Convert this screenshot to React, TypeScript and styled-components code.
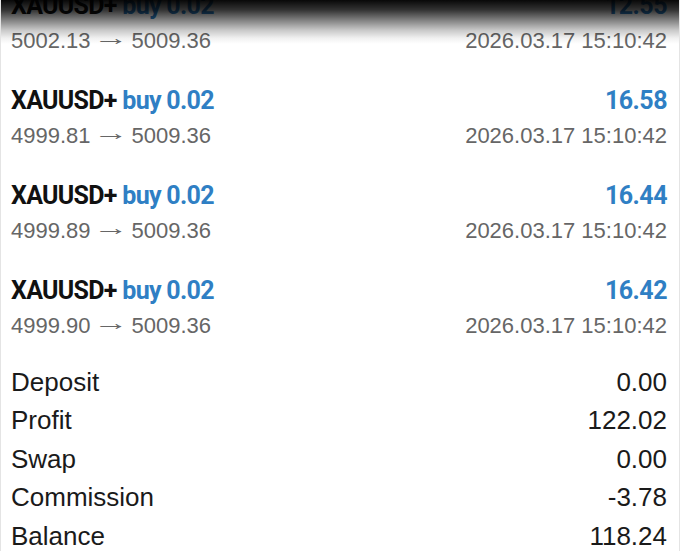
import { FC } from 'react'
import styled, { createGlobalStyle } from 'styled-components'


const GlobalStyle = createGlobalStyle`
  html, body {
    margin: 0;
    padding: 0;
    background: #ffffff;
  }
`

const Screen = styled.div`
  position: relative;
  width: 680px;
  height: 551px;
  overflow: hidden;
  background: #ffffff;
  border-left: 1px solid #e4e4e4;
  border-right: 1px solid #e4e4e4;
  box-sizing: border-box;
`

// dark shade the status bar casts over the scrolled list
const TopShade = styled.div`
  position: absolute;
  left: 0;
  right: 0;
  top: 0;
  height: 44px;
  pointer-events: none;
  background: linear-gradient(
    to bottom,
    rgba(0, 0, 0, 0.97) 0px,
    rgba(0, 0, 0, 0.8) 10px,
    rgba(0, 0, 0, 0.5) 20px,
    rgba(0, 0, 0, 0.22) 30px,
    rgba(0, 0, 0, 0.06) 38px,
    rgba(0, 0, 0, 0) 44px
  );
`

const DealList = styled.div`
  display: flex;
  flex-direction: column;
  margin-top: -25px;
`

const Deal = styled.div`
  display: flex;
  flex-direction: column;
  padding: 12px 12px 11px 10px;
`

const DealLine = styled.div`
  display: flex;
  justify-content: space-between;
  align-items: center;
  height: 36px;
`

const Symbol = styled.span`
  font-family: Roboto, 'Liberation Sans', sans-serif;
  font-weight: 700;
  font-size: 25px;
  letter-spacing: -0.7px;
  color: #111111;
`

const Side = styled.span`
  color: #2f7fc4;
`

const Amount = styled.span`
  font-family: Roboto, 'Liberation Sans', sans-serif;
  font-weight: 700;
  font-size: 25px;
  letter-spacing: -0.5px;
  color: #2f7fc4;
`

const SubText = styled.span`
  font-family: 'Liberation Sans', Arial, sans-serif;
  font-size: 22px;
  color: #666666;
`

const Arrow = styled.span`
  display: inline-block;
  margin: 0 10px 0 9px;
  transform: translateY(-3px) scaleX(1.6);
`

const Summary = styled.div`
  display: flex;
  flex-direction: column;
  padding: 8px 12px 0 10px;
`

const SummaryRow = styled.div`
  display: flex;
  justify-content: space-between;
  align-items: center;
  height: 38.5px;
  font-family: 'Liberation Sans', Arial, sans-serif;
  font-size: 26px;
  color: #1a1a1a;
`


interface IDeal {
  open: string
  close: string
  profit: string
  time: string
}

const deals: IDeal[] = [
  { open: '5002.13', close: '5009.36', profit: '12.55', time: '2026.03.17 15:10:42' },
  { open: '4999.81', close: '5009.36', profit: '16.58', time: '2026.03.17 15:10:42' },
  { open: '4999.89', close: '5009.36', profit: '16.44', time: '2026.03.17 15:10:42' },
  { open: '4999.90', close: '5009.36', profit: '16.42', time: '2026.03.17 15:10:42' },
]

const totals: [string, string][] = [
  ['Deposit', '0.00'],
  ['Profit', '122.02'],
  ['Swap', '0.00'],
  ['Commission', '-3.78'],
  ['Balance', '118.24'],
]


const DealItem: FC<{ deal: IDeal }> = ({ deal: { open, close, profit, time } }) => (
  <Deal>
    <DealLine>
      <Symbol>
        XAUUSD+ <Side>buy 0.02</Side>
      </Symbol>
      <Amount>{profit}</Amount>
    </DealLine>
    <DealLine>
      <SubText>
        {open}<Arrow>→</Arrow>{close}
      </SubText>
      <SubText>{time}</SubText>
    </DealLine>
  </Deal>
)


const App: FC = () => (
  <>
    <GlobalStyle />
    <Screen>
      <DealList>
        {deals.map((deal, idx) => (
          <DealItem key={idx} deal={deal} />
        ))}
      </DealList>

      <Summary>
        {totals.map(([label, value]) => (
          <SummaryRow key={label}>
            <span>{label}</span>
            <span>{value}</span>
          </SummaryRow>
        ))}
      </Summary>

      <TopShade />
    </Screen>
  </>
)


export default App
